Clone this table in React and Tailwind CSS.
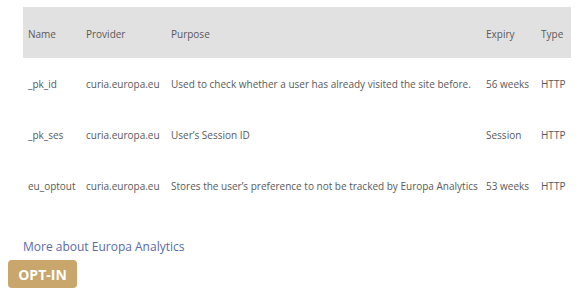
const cookies = [
  {
    name: '_pk_id',
    provider: 'curia.europa.eu',
    purpose: 'Used to check whether a user has already visited the site before.',
    expiry: '56 weeks',
    type: 'HTTP',
  },
  {
    name: '_pk_ses',
    provider: 'curia.europa.eu',
    purpose: 'User’s Session ID',
    expiry: 'Session',
    type: 'HTTP',
  },
  {
    name: 'eu_optout',
    provider: 'curia.europa.eu',
    purpose: 'Stores the user’s preference to not be tracked by Europa Analytics',
    expiry: '53 weeks',
    type: 'HTTP',
  },
];

export default function App() {
  return (
    <div className="w-[581px] h-[300px] bg-white pt-[7px] font-['Open_Sans',sans-serif] text-[#595959]">
      <table className="ml-[23px] w-[548px] table-fixed border-collapse text-[10px]">
        <colgroup>
          <col className="w-[58px]" />
          <col className="w-[85px]" />
          <col className="w-[315px]" />
          <col className="w-[55px]" />
          <col className="w-[35px]" />
        </colgroup>
        <thead>
          <tr className="h-[51px] bg-[#e1e1e1] text-left">
            <th className="pl-[5px] pt-[4px] font-normal">Name</th>
            <th className="pl-[5px] pt-[4px] font-normal">Provider</th>
            <th className="pl-[5px] pt-[4px] font-normal">Purpose</th>
            <th className="pl-[5px] pt-[4px] font-normal">Expiry</th>
            <th className="pl-[5px] pt-[4px] font-normal">Type</th>
          </tr>
        </thead>
        <tbody>
          {cookies.map((c) => (
            <tr key={c.name} className="h-[51px]">
              <td className="pl-[5px] pt-[2px] whitespace-nowrap">{c.name}</td>
              <td className="pl-[5px] pt-[2px] whitespace-nowrap">{c.provider}</td>
              <td className="pl-[5px] pt-[2px] whitespace-nowrap">{c.purpose}</td>
              <td className="pl-[5px] pt-[2px] whitespace-nowrap">{c.expiry}</td>
              <td className="pl-[5px] pt-[2px] whitespace-nowrap">{c.type}</td>
            </tr>
          ))}
        </tbody>
      </table>
      <a href="#" className="mt-[28px] ml-[23px] block text-[12px] leading-[16px] text-[#5b6aa6]">
        More about Europa Analytics
      </a>
      <button className="mt-[5px] ml-[8px] flex h-[28px] w-[69px] items-center justify-center rounded-[4px] bg-[#c9a66b] text-[14px] font-bold text-white">
        OPT-IN
      </button>
    </div>
  );
}
